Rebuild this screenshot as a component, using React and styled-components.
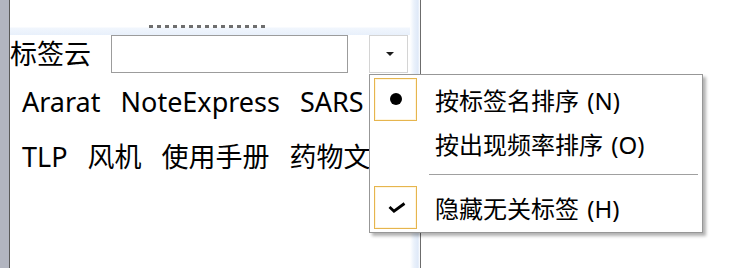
import React from "react";
import styled, { createGlobalStyle } from "styled-components";

const GlobalStyle = createGlobalStyle`
  html, body {
    margin: 0;
    padding: 0;
    background: #ffffff;
    overflow: hidden;
  }
  * {
    box-sizing: border-box;
  }
`;

const Screen = styled.div`
  position: relative;
  display: flex;
  width: 732px;
  height: 268px;
  background: #ffffff;
  font-family: "Noto Sans", "Noto Sans CJK SC", sans-serif;
  color: #000;
`;

const LeftStrip = styled.div`
  width: 10px;
  flex: none;
  background: #b2b5c0;
  border-right: 1px solid #5a5a5a;
`;

const Panel = styled.div`
  width: 400px;
  flex: none;
  display: flex;
  flex-direction: column;
`;

const Header = styled.div`
  height: 35px;
  display: flex;
  justify-content: center;
  padding-top: 25px;
  background: linear-gradient(
    to bottom,
    #ffffff 0,
    #ffffff 27px,
    #f1f6fd 28px,
    #e8f0fb 35px
  );
`;

const Grip = styled.div`
  width: 116px;
  height: 3px;
  margin-left: -6px;
  background: repeating-linear-gradient(
    to right,
    #6e6e6e 0,
    #6e6e6e 4px,
    transparent 4px,
    transparent 8px
  );
`;

const ToolRow = styled.div`
  height: 38px;
  display: flex;
  align-items: center;
`;

const Label = styled.span`
  width: 101px;
  font-size: 27px;
  line-height: 38px;
`;

const SearchBox = styled.input`
  width: 237px;
  height: 38px;
  border: 1px solid #9c9c9c;
  background: #ffffff;
  outline: none;
  padding: 0 4px;
  margin: 0;
`;

const DropButton = styled.div`
  width: 39px;
  height: 38px;
  margin-left: 21px;
  border: 1px solid #d4d4d4;
  background: #ffffff;
  display: flex;
  align-items: center;
  justify-content: center;
`;

const Caret = styled.span`
  width: 0;
  height: 0;
  margin-left: 2px;
  border-left: 4px solid transparent;
  border-right: 4px solid transparent;
  border-top: 4px solid #1c1c1c;
`;

const TagCloud = styled.div`
  display: flex;
  flex-wrap: wrap;
  column-gap: 20px;
  margin-top: 1px;
  padding: 0 20px 0 12px;
`;

const Tag = styled.span`
  font-size: 27px;
  line-height: 55px;
  white-space: nowrap;
`;

const Edge = styled.div`
  width: 11px;
  flex: none;
  background: linear-gradient(
    to right,
    #ffffff 0,
    #eaf1fb 40%,
    #dfe9f8 80%,
    #ffffff 100%
  );
  border-right: 1px solid #6c6c6c;
`;

const Menu = styled.div`
  position: absolute;
  left: 369px;
  top: 74px;
  width: 334px;
  height: 159px;
  padding: 2px 2px 3px 1px;
  background: #ffffff;
  border: 1px solid #979797;
  box-shadow: 3px 3px 3px rgba(0, 0, 0, 0.3);
`;

const Item = styled.div`
  height: 44px;
  display: flex;
  align-items: center;
  padding-left: 3px;
`;

const IconBox = styled.div`
  width: 43px;
  height: 43px;
  flex: none;
  display: flex;
  align-items: center;
  justify-content: center;
  border: 1px solid ${(p) => (p.$checked ? "#e6b54e" : "transparent")};
  box-shadow: ${(p) => (p.$checked ? "inset 0 0 0 1px #fff6e0" : "none")};
`;

const Bullet = styled.span`
  width: 12px;
  height: 12px;
  border-radius: 50%;
  background: #000;
`;

const ItemText = styled.span`
  margin-left: 18px;
  font-size: 24px;
  white-space: nowrap;
  word-spacing: 2px;
`;

const Separator = styled.div`
  height: 1px;
  margin: 9px 2px 10px 58px;
  background: #a0a0a0;
`;

function Check() {
  return (
    <svg width="18" height="11" viewBox="0 0 18 11" style={{ marginLeft: 2 }}>
      <polyline
        points="1.5,5 6,9.2 16.5,1.5"
        fill="none"
        stroke="#000"
        strokeWidth="2.8"
      />
    </svg>
  );
}

const tags = ["Ararat", "NoteExpress", "SARS", "TLP", "风机", "使用手册", "药物文"];

export default function App() {
  return (
    <>
      <GlobalStyle />
      <Screen>
        <LeftStrip />
        <Panel>
          <Header>
            <Grip />
          </Header>
          <ToolRow>
            <Label>标签云</Label>
            <SearchBox type="text" />
            <DropButton>
              <Caret />
            </DropButton>
          </ToolRow>
          <TagCloud>
            {tags.map((t) => (
              <Tag key={t}>{t}</Tag>
            ))}
          </TagCloud>
        </Panel>
        <Edge />

        <Menu>
          <Item>
            <IconBox $checked>
              <Bullet />
            </IconBox>
            <ItemText>按标签名排序 (N)</ItemText>
          </Item>
          <Item>
            <IconBox />
            <ItemText>按出现频率排序 (O)</ItemText>
          </Item>
          <Separator />
          <Item>
            <IconBox $checked>
              <Check />
            </IconBox>
            <ItemText>隐藏无关标签 (H)</ItemText>
          </Item>
        </Menu>
      </Screen>
    </>
  );
}
